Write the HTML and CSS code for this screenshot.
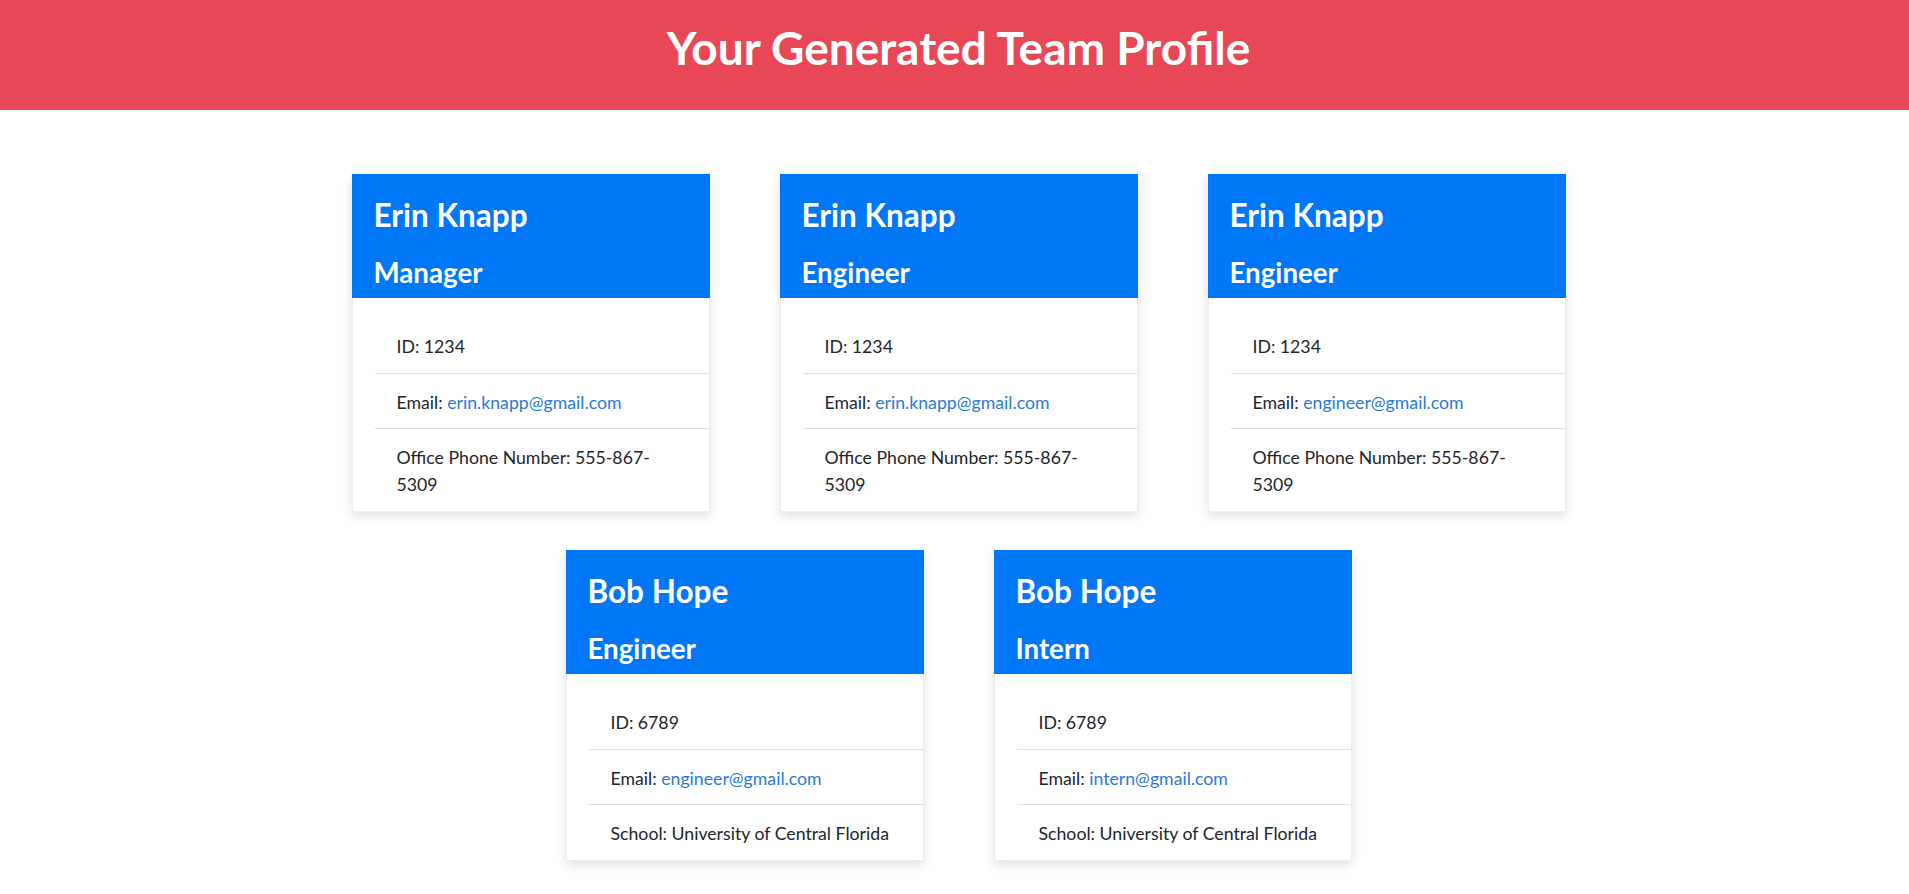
FILE: index.html
```html
<!DOCTYPE html>
<html lang="en">
<head>
<meta charset="utf-8">
<title>Team Profile</title>
<link rel="stylesheet" href="styles.css">
</head>
<body>
<header class="top">
  <h1 class="title">Your Generated Team Profile</h1>
</header>
<main class="team">
  <div class="row">
    <div class="card">
      <div class="card-head"><h2 class="name">Erin Knapp</h2><h3 class="role">Manager</h3></div>
      <ul class="list">
        <li class="item">ID: 1234</li>
        <li class="item">Email: <a class="link" href="#">erin.knapp@gmail.com</a></li>
        <li class="item">Office Phone Number: 555-867-5309</li>
      </ul>
    </div>
    <div class="card">
      <div class="card-head"><h2 class="name">Erin Knapp</h2><h3 class="role">Engineer</h3></div>
      <ul class="list">
        <li class="item">ID: 1234</li>
        <li class="item">Email: <a class="link" href="#">erin.knapp@gmail.com</a></li>
        <li class="item">Office Phone Number: 555-867-5309</li>
      </ul>
    </div>
    <div class="card">
      <div class="card-head"><h2 class="name">Erin Knapp</h2><h3 class="role">Engineer</h3></div>
      <ul class="list">
        <li class="item">ID: 1234</li>
        <li class="item">Email: <a class="link" href="#">engineer@gmail.com</a></li>
        <li class="item">Office Phone Number: 555-867-5309</li>
      </ul>
    </div>
  </div>
  <div class="row">
    <div class="card">
      <div class="card-head"><h2 class="name">Bob Hope</h2><h3 class="role">Engineer</h3></div>
      <ul class="list">
        <li class="item">ID: 6789</li>
        <li class="item">Email: <a class="link" href="#">engineer@gmail.com</a></li>
        <li class="item">School: University of Central Florida</li>
      </ul>
    </div>
    <div class="card">
      <div class="card-head"><h2 class="name">Bob Hope</h2><h3 class="role">Intern</h3></div>
      <ul class="list">
        <li class="item">ID: 6789</li>
        <li class="item">Email: <a class="link" href="#">intern@gmail.com</a></li>
        <li class="item">School: University of Central Florida</li>
      </ul>
    </div>
  </div>
</main>
</body>
</html>
```
FILE: styles.css
```css
* { box-sizing: border-box; }
html, body { margin: 0; padding: 0; }
body {
  font-family: "Lato", "Segoe UI", sans-serif;
  color: #212529;
  background: #fff;
  font-size: 17.7px;
}
.top {
  background: #e84855;
  height: 110px;
  padding: 20px 0 0 8px;
  text-align: center;
}
.title {
  margin: 0;
  color: #fff;
  font-size: 46px;
  font-weight: 700;
  line-height: 1.2;
}
.team {
  padding: 64px 0 33px 8px;
  display: flex;
  flex-direction: column;
  gap: 38px;
}
.row {
  display: flex;
  justify-content: center;
  gap: 70px;
}
.card {
  width: 358px;
  background: #fff;
  border: 1px solid rgba(0,0,0,0.07);
  box-shadow: 0 4px 10px rgba(0,0,0,0.12);
}
.card-head {
  background: #0077f7;
  color: #fff;
  height: 124px;
  margin: -1px -1px 0 -1px;
  padding: 22.8px 22px 0 22px;
}
.name {
  margin: 0 0 21.4px 0;
  font-size: 31.5px;
  font-weight: 700;
  line-height: 1.2;
}
.role {
  margin: 0;
  font-size: 27.7px;
  font-weight: 700;
  line-height: 1.2;
}
.list {
  list-style: none;
  margin: 0;
  padding: 20px 0 0 22px;
}
.item {
  padding: 16px 27px 12px 22px;
  line-height: 26.7px;
  border-bottom: 1px solid #dfdfdf;
}
.item:last-child { border-bottom: 0; }
.link {
  color: #2a7ad9;
  text-decoration: none;
}
```
